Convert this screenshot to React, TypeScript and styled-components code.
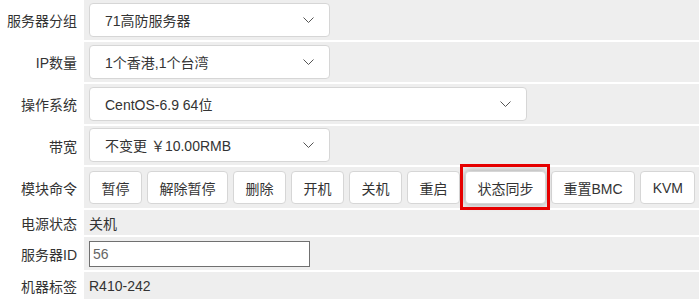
import styled, { createGlobalStyle } from "styled-components";

const GlobalStyle = createGlobalStyle`
  body {
    margin: 0;
    background: #fff;
    font-family: "Liberation Sans", Arial, "Noto Sans CJK SC", sans-serif;
    font-size: 14px;
    color: #333;
  }
`;

const Form = styled.div`
  display: grid;
  grid-template-columns: 84px 1fr;
  row-gap: 2px;
  width: 699px;
`;

const Label = styled.div`
  display: flex;
  align-items: center;
  justify-content: flex-end;
  padding-right: 7px;
  background: #fff;
  color: #333;
  white-space: nowrap;
`;

const Cell = styled.div<{ $pad?: string; $h?: number }>`
  display: flex;
  align-items: center;
  background: #eeeeee;
  padding: ${(p) => p.$pad || "3px 5px"};
  min-height: ${(p) => (p.$h ? `${p.$h}px` : "auto")};
  box-sizing: border-box;
  min-width: 0;
`;

const Select = styled.div<{ $w: number }>`
  display: flex;
  align-items: center;
  justify-content: space-between;
  box-sizing: border-box;
  width: ${(p) => p.$w}px;
  height: 34px;
  padding: 0 15px 0 15px;
  background: #fff;
  border: 1px solid #d6d6d6;
  border-radius: 4px;
  color: #333;
`;

const Chevron = styled.svg`
  width: 11px;
  height: 6px;
  flex: none;
`;

const Buttons = styled.div`
  display: flex;
  gap: 5px;
  flex-wrap: nowrap;
`;

const Btn = styled.button<{ $active?: boolean }>`
  flex: none;
  white-space: nowrap;
  height: 33px;
  padding: 0 11.5px;
  background: #fff;
  border: 1px solid #d6d6d6;
  border-radius: 4px;
  font: inherit;
  color: #333;
  cursor: pointer;
  box-shadow: ${(p) => (p.$active ? "0 0 7px rgba(0,0,0,0.35)" : "none")};
`;

const Marked = styled.div`
  position: relative;
  display: flex;
  flex: none;

  &::after {
    content: "";
    position: absolute;
    top: -7px;
    bottom: -6px;
    left: -5px;
    right: -4px;
    border: 3px solid #e60000;
    pointer-events: none;
  }
`;

const Text = styled.span`
  color: #333;
`;

const Input = styled.input`
  box-sizing: border-box;
  width: 221px;
  height: 26px;
  padding: 0 3px;
  border: 1px solid #707070;
  font: inherit;
  color: #666;
  background: #fff;
  outline: none;
`;

function Arrow() {
  return (
    <Chevron viewBox="0 0 11 6">
      <path d="M0.5 0.5 L5.5 5.5 L10.5 0.5" fill="none" stroke="#555" strokeWidth="1" />
    </Chevron>
  );
}

const commands = ["暂停", "解除暂停", "删除", "开机", "关机", "重启", "状态同步", "重置BMC", "KVM"];

export default function App() {
  return (
    <>
      <GlobalStyle />
      <Form>
        <Label>服务器分组</Label>
        <Cell>
          <Select $w={241}>
            <span>71高防服务器</span>
            <Arrow />
          </Select>
        </Cell>

        <Label>IP数量</Label>
        <Cell>
          <Select $w={241}>
            <span>1个香港,1个台湾</span>
            <Arrow />
          </Select>
        </Cell>

        <Label>操作系统</Label>
        <Cell>
          <Select $w={438}>
            <span>CentOS-6.9 64位</span>
            <Arrow />
          </Select>
        </Cell>

        <Label>带宽</Label>
        <Cell $pad="2px 5px 3px">
          <Select $w={241}>
            <span>不变更 ￥10.00RMB</span>
            <Arrow />
          </Select>
        </Cell>

        <Label>模块命令</Label>
        <Cell $pad="4px 5px">
          <Buttons>
            {commands.map((c) =>
              c === "状态同步" ? (
                <Marked key={c}>
                  <Btn $active>{c}</Btn>
                </Marked>
              ) : (
                <Btn key={c}>{c}</Btn>
              )
            )}
          </Buttons>
        </Cell>

        <Label>电源状态</Label>
        <Cell $pad="0 5px" $h={25}>
          <Text>关机</Text>
        </Cell>

        <Label>服务器ID</Label>
        <Cell $pad="4px 5px 3px">
          <Input defaultValue="56" />
        </Cell>

        <Label>机器标签</Label>
        <Cell $pad="0 5px" $h={27}>
          <Text>R410-242</Text>
        </Cell>
      </Form>
    </>
  );
}
